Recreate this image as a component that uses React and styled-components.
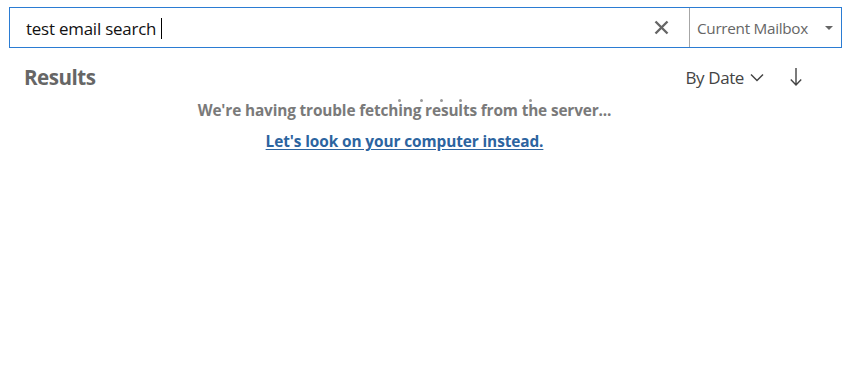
import React from "react";
import styled, { createGlobalStyle } from "styled-components";

const Global = createGlobalStyle`
  html, body { margin: 0; padding: 0; background: #fff; }
  body { font-family: "Open Sans", "Noto Sans", sans-serif; }
`;

const Page = styled.div`
  width: 846px;
  height: 375px;
  background: #fff;
  position: relative;
`;

const SearchBar = styled.div`
  margin: 7px 0 0 9px;
  width: 833px;
  height: 41px;
  box-sizing: border-box;
  border: 1px solid #2b7cd3;
  display: flex;
  align-items: stretch;
`;

const QueryField = styled.div`
  flex: 1;
  display: flex;
  align-items: center;
  padding-left: 16px;
  padding-top: 2px;
  font-size: 16.9px;
  color: #111;
  letter-spacing: -0.2px;
`;

const Caret = styled.span`
  display: inline-block;
  width: 1px;
  height: 21px;
  background: #000;
  margin-left: 5px;
`;

const ClearButton = styled.div`
  width: 52px;
  display: flex;
  align-items: center;
  justify-content: center;
  padding-right: 2px;
`;

const ScopeSelect = styled.div`
  width: 152px;
  border-left: 1px solid #a6a6a6;
  display: flex;
  align-items: center;
  justify-content: space-between;
  padding: 0 8px 0 7px;
  box-sizing: border-box;
  font-size: 15.3px;
  color: #666;
  letter-spacing: -0.3px;
`;

const Triangle = styled.span`
  width: 0;
  height: 0;
  border-left: 4px solid transparent;
  border-right: 4px solid transparent;
  border-top: 4px solid #666;
  margin-top: 1px;
`;

const HeaderRow = styled.div`
  display: flex;
  align-items: center;
  justify-content: space-between;
  padding: 0 44px 0 24px;
  height: 34px;
  margin-top: 12px;
`;

const Title = styled.h1`
  margin: 0;
  font-size: 20.6px;
  font-weight: 700;
  color: #666;
  letter-spacing: -0.5px;
`;

const SortControls = styled.div`
  display: flex;
  align-items: center;
  gap: 26px;
`;

const SortBy = styled.div`
  display: flex;
  align-items: center;
  gap: 6px;
  font-size: 17px;
  color: #444;
  letter-spacing: -0.4px;
`;

const Message = styled.div`
  width: 809px;
  display: flex;
  flex-direction: column;
  align-items: center;
  margin-top: 7px;
`;

const ErrorText = styled.p`
  margin: 0;
  font-size: 15.4px;
  font-weight: 700;
  color: #7a7a7a;
  letter-spacing: -0.15px;
  line-height: 20px;
`;

const RetryLink = styled.a`
  margin-top: 11px;
  font-size: 15.4px;
  font-weight: 700;
  color: #2c64a0;
  text-decoration: underline;
  text-underline-offset: 2px;
  letter-spacing: -0.1px;
  line-height: 20px;
  cursor: pointer;
`;

const Dot = styled.span`
  position: absolute;
  top: 92px;
  width: 3px;
  height: 3px;
  border-radius: 50%;
  background: #999;
`;

const dots = [398, 420, 440, 459, 529];

export default function App() {
  return (
    <Page>
      <Global />
      <SearchBar>
        <QueryField>
          test email search
          <Caret />
        </QueryField>
        <ClearButton>
          <svg width="15" height="15" viewBox="0 0 15 15">
            <path d="M1.5 1.5 L13.5 13.5 M13.5 1.5 L1.5 13.5" stroke="#666" strokeWidth="2.4" />
          </svg>
        </ClearButton>
        <ScopeSelect>
          Current Mailbox
          <Triangle />
        </ScopeSelect>
      </SearchBar>
      <HeaderRow>
        <Title>Results</Title>
        <SortControls>
          <SortBy>
            By Date
            <svg width="14" height="9" viewBox="0 0 14 9">
              <path d="M1 1.5 L7 7.5 L13 1.5" stroke="#444" strokeWidth="1.5" fill="none" />
            </svg>
          </SortBy>
          <svg width="12" height="18" viewBox="0 0 12 18">
            <path d="M6 0 V17 M0.8 11.5 L6 17 L11.2 11.5" stroke="#444" strokeWidth="1.4" fill="none" />
          </svg>
        </SortControls>
      </HeaderRow>
      {dots.map((x) => (
        <Dot key={x} style={{ left: x }} />
      ))}
      <Message>
        <ErrorText>We're having trouble fetching results from the server...</ErrorText>
        <RetryLink>Let's look on your computer instead.</RetryLink>
      </Message>
    </Page>
  );
}
